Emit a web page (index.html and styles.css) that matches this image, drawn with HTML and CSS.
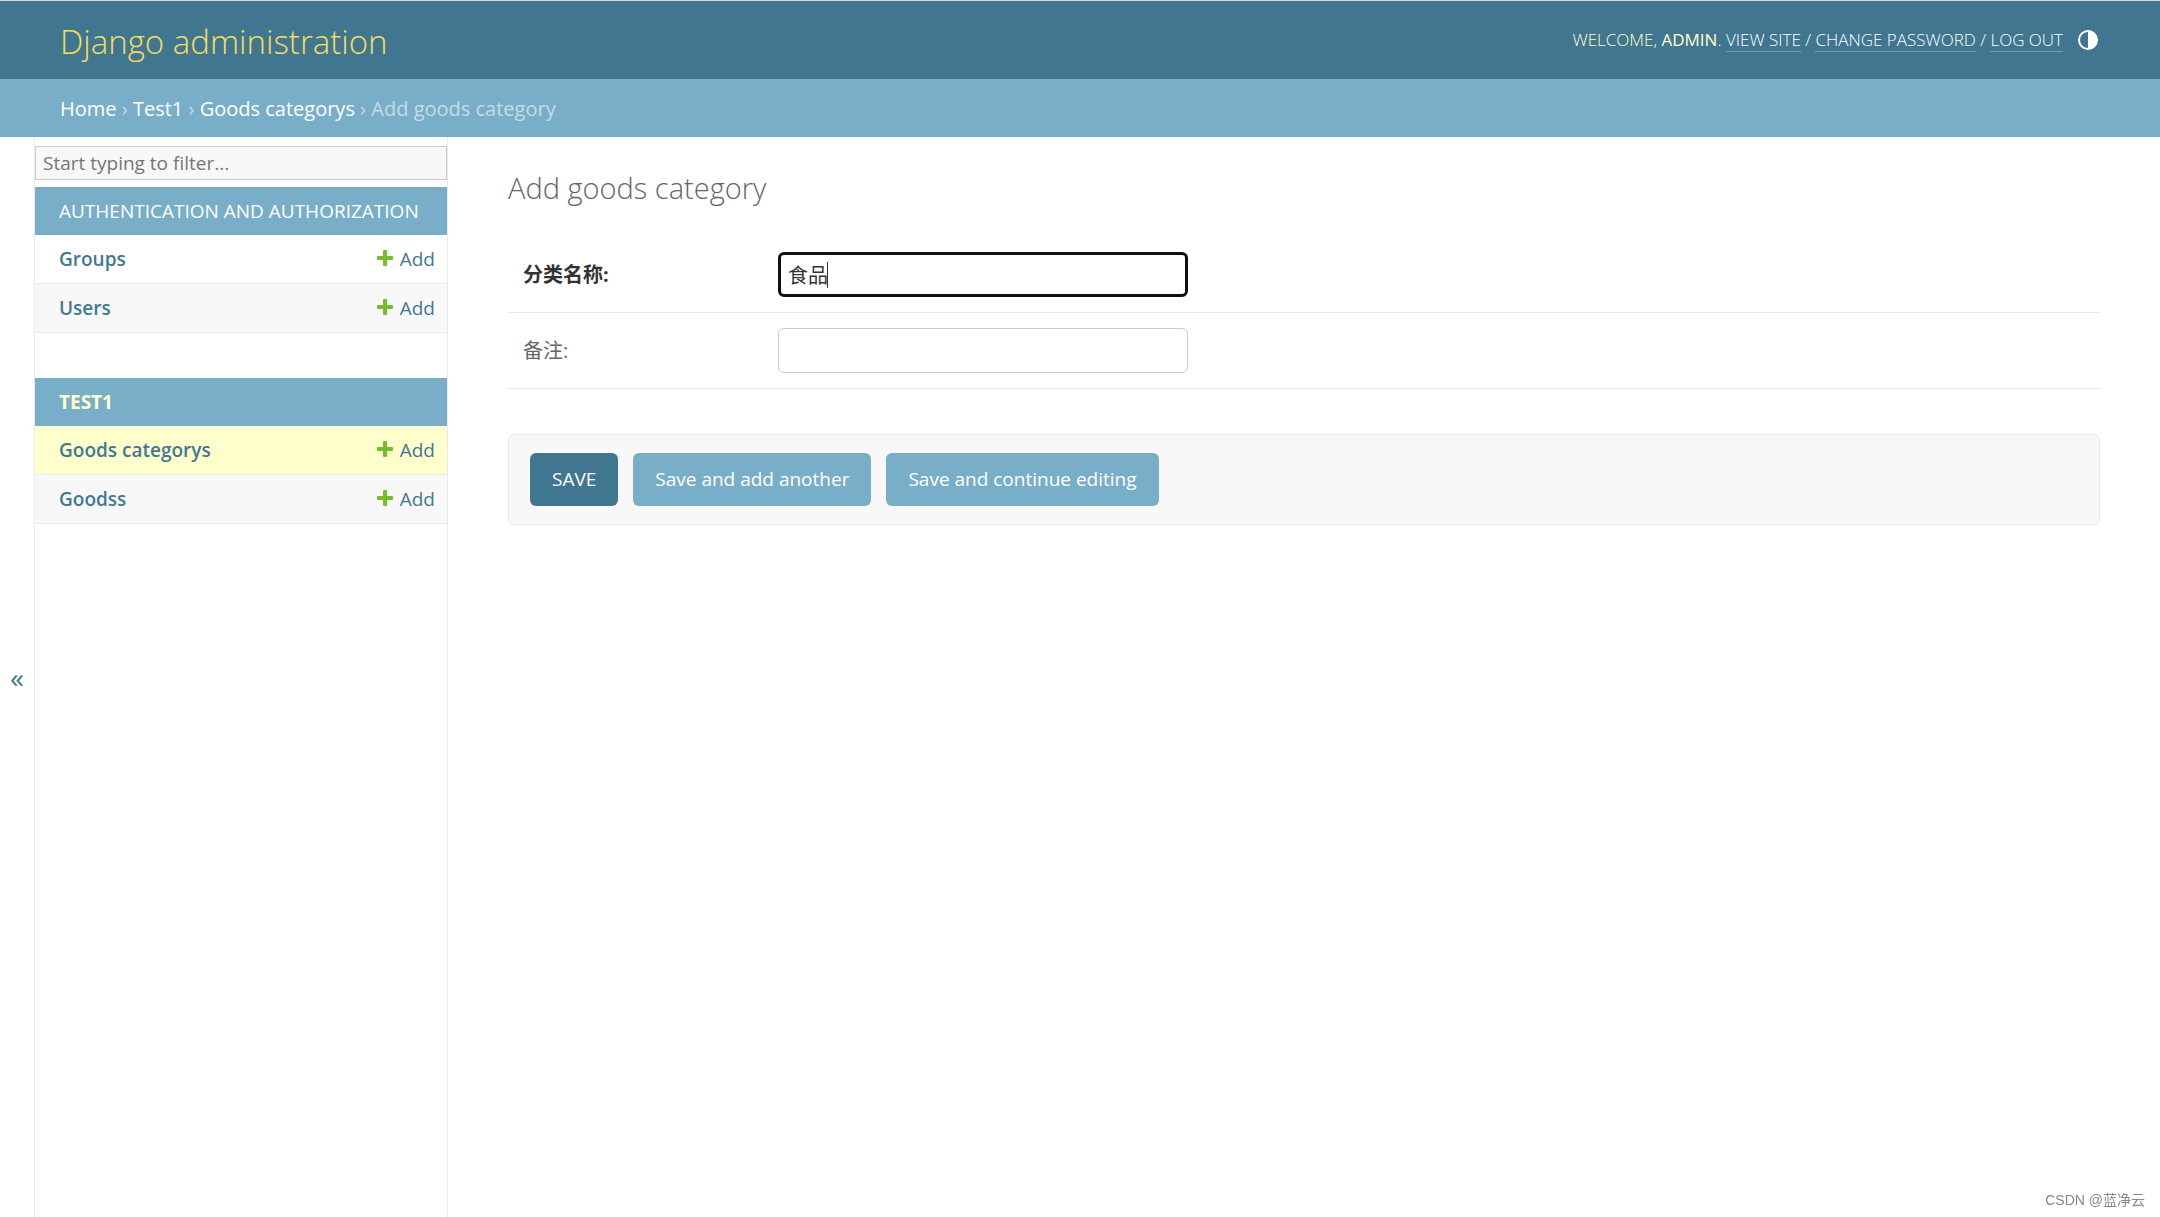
FILE: index.html
```html
<!DOCTYPE html>
<html lang="en">
<head>
    <meta charset="utf-8">
    <title>Add goods category | Django site admin</title>
    <link rel="stylesheet" href="styles.css">
</head>
<body>
    <header class="header">
        <h1 class="site-name"><a href="#">Django administration</a></h1>
        <div class="user-tools">
            <div>Welcome, <strong>admin</strong>. <a href="#">View site</a> / <a href="#">Change password</a> / <a href="#">Log out</a></div>
            <button class="theme-toggle" type="button" aria-label="Toggle theme">
                <svg viewBox="0 0 20 20" width="20" height="20">
                    <circle cx="10" cy="10" r="9" fill="none" stroke="currentColor" stroke-width="2"/>
                    <path d="M10 1a9 9 0 0 1 0 18z" fill="currentColor"/>
                </svg>
            </button>
        </div>
    </header>

    <nav class="breadcrumbs">
        <a href="#">Home</a> &rsaquo;
        <a href="#">Test1</a> &rsaquo;
        <a href="#">Goods categorys</a> &rsaquo;
        Add goods category
    </nav>

    <div class="main">
        <button class="toggle-sidebar" type="button" aria-label="Toggle navigation">&laquo;</button>

        <nav class="sidebar">
            <input class="nav-filter" type="search" placeholder="Start typing to filter..." aria-label="Filter navigation items">

            <table class="module">
                <caption><a href="#">Authentication and Authorization</a></caption>
                <tr>
                    <th scope="row"><a href="#">Groups</a></th>
                    <td><a class="addlink" href="#"><svg viewBox="0 0 16 16" width="16" height="16"><path d="M6 1q0-1 1-1h2q1 0 1 1v5h5q1 0 1 1v2q0 1-1 1h-5v5q0 1-1 1H7q-1 0-1-1v-5H1q-1 0-1-1V7q0-1 1-1h5z"/></svg>Add</a></td>
                </tr>
                <tr>
                    <th scope="row"><a href="#">Users</a></th>
                    <td><a class="addlink" href="#"><svg viewBox="0 0 16 16" width="16" height="16"><path d="M6 1q0-1 1-1h2q1 0 1 1v5h5q1 0 1 1v2q0 1-1 1h-5v5q0 1-1 1H7q-1 0-1-1v-5H1q-1 0-1-1V7q0-1 1-1h5z"/></svg>Add</a></td>
                </tr>
            </table>

            <table class="module current-app">
                <caption><a href="#">Test1</a></caption>
                <tr class="current-model">
                    <th scope="row"><a href="#">Goods categorys</a></th>
                    <td><a class="addlink" href="#"><svg viewBox="0 0 16 16" width="16" height="16"><path d="M6 1q0-1 1-1h2q1 0 1 1v5h5q1 0 1 1v2q0 1-1 1h-5v5q0 1-1 1H7q-1 0-1-1v-5H1q-1 0-1-1V7q0-1 1-1h5z"/></svg>Add</a></td>
                </tr>
                <tr>
                    <th scope="row"><a href="#">Goodss</a></th>
                    <td><a class="addlink" href="#"><svg viewBox="0 0 16 16" width="16" height="16"><path d="M6 1q0-1 1-1h2q1 0 1 1v5h5q1 0 1 1v2q0 1-1 1h-5v5q0 1-1 1H7q-1 0-1-1v-5H1q-1 0-1-1V7q0-1 1-1h5z"/></svg>Add</a></td>
                </tr>
            </table>
        </nav>

        <main class="content">
            <h2 class="title">Add goods category</h2>
            <form>
                <div class="form-row">
                    <label class="required" for="id_name">分类名称:</label>
                    <div class="field">
                        <input class="text-field active" type="text" id="id_name" value="食品">
                        <span class="caret"></span>
                    </div>
                </div>
                <div class="form-row">
                    <label for="id_remark">备注:</label>
                    <div class="field">
                        <input class="text-field" type="text" id="id_remark">
                    </div>
                </div>
                <div class="submit-row">
                    <button class="button default" type="submit">SAVE</button>
                    <button class="button" type="submit">Save and add another</button>
                    <button class="button" type="submit">Save and continue editing</button>
                </div>
            </form>
        </main>
    </div>

    <div class="watermark">CSDN @蓝净云</div>
</body>
</html>
```
FILE: styles.css
```css
* {
    box-sizing: border-box;
}
body {
    margin: 0;
    min-height: 100vh;
    display: flex;
    flex-direction: column;
    border-top: 1px solid #d5dadb;
    font-family: "Open Sans", "Noto Sans CJK SC", sans-serif;
    font-size: 19px;
    line-height: 24px;
    color: #333;
    background: #fff;
}
a {
    color: #417893;
    text-decoration: none;
}
button {
    font-family: inherit;
    border: none;
    cursor: pointer;
}

/* Header */
.header {
    display: flex;
    justify-content: space-between;
    align-items: center;
    padding: 0 60px;
    background: #417690;
    color: #ffc;
}
.site-name {
    margin: 0;
    padding: 19px 0 15px;
    font-size: 33px;
    line-height: 44px;
    font-weight: 300;
}
.site-name a {
    color: #f5dd5d;
}
.user-tools {
    display: flex;
    align-items: center;
    gap: 15px;
    font-size: 17px;
    line-height: 20px;
    font-weight: 300;
    text-transform: uppercase;
}
.user-tools a {
    color: #fff;
    border-bottom: 1px solid #7198ac;
}
.theme-toggle {
    padding: 0;
    margin-right: 2px;
    background: none;
    color: #fff;
}
.theme-toggle svg {
    display: block;
}
.breadcrumbs {
    padding: 18px 60px 16px;
    font-size: 20px;
    background: #79aec8;
    color: #c4dce8;
}
.breadcrumbs a {
    color: #fff;
}

/* Sidebar */
.main {
    display: flex;
    flex: 1;
}
.toggle-sidebar {
    width: 35px;
    padding: 0;
    border-right: 1px solid #eaeaea;
    background: #fff;
    color: #417893;
    font-size: 28px;
}
.sidebar {
    width: 413px;
    flex-shrink: 0;
    padding-top: 9px;
    border-right: 1px solid #eaeaea;
}
.nav-filter {
    display: block;
    width: 100%;
    height: 34px;
    margin-bottom: 7px;
    padding: 2px 7px;
    border: 1px solid #ccc;
    border-radius: 0;
    background: #f8f8f8;
    font-family: inherit;
    font-size: 19px;
}
.nav-filter::placeholder {
    color: #757575;
}
.module {
    width: 100%;
    margin-bottom: 45px;
    border-spacing: 0;
}
.module caption {
    padding: 12px 24px;
    background: #79aec8;
    text-align: left;
    text-transform: uppercase;
}
.module caption a {
    color: #fff;
}
.module th,
.module td {
    height: 49px;
    padding: 12px;
    border-bottom: 1px solid #eaeaea;
    text-align: left;
}
.module th {
    padding-left: 24px;
    font-weight: 600;
}
.module td {
    text-align: right;
}
.module tr:nth-child(even) {
    background: #f8f8f8;
}
.module .current-model {
    background: #ffc;
}
.current-app caption a {
    color: #ffc;
    font-weight: 700;
}
.addlink {
    display: inline-flex;
    gap: 7px;
    vertical-align: top;
}
.addlink svg {
    margin-top: 3px;
    fill: #70bf2b;
}

/* Form */
.content {
    flex: 1;
    padding: 29px 60px;
}
.title {
    margin: 0 0 42px;
    font-size: 29px;
    line-height: 44px;
    font-weight: 300;
    color: #666;
}
.form-row {
    display: flex;
    align-items: center;
    padding: 15px;
    border-bottom: 1px solid #eaeaea;
}
.form-row:first-child {
    padding-top: 0;
}
.form-row label {
    width: 255px;
    font-size: 20px;
    color: #666;
}
.form-row .required {
    font-weight: 700;
    color: #333;
}
.field {
    position: relative;
}
.text-field {
    display: block;
    width: 410px;
    height: 45px;
    padding: 8px 9px;
    border: 1px solid #ccc;
    border-radius: 6px;
    font-family: inherit;
    font-size: 20px;
    color: #333;
}
.text-field.active {
    padding: 6px 7px;
    border: 3px solid #101010;
}
.caret {
    position: absolute;
    left: 49px;
    top: 10px;
    width: 1px;
    height: 26px;
    background: #333;
}
.submit-row {
    display: flex;
    gap: 15px;
    margin-top: 45px;
    padding: 18px 21px;
    border: 1px solid #eaeaea;
    border-radius: 6px;
    background: #f8f8f8;
}
.button {
    padding: 15px 22px;
    border-radius: 6px;
    background: #79aec8;
    color: #fff;
    font-size: 19px;
    line-height: 23px;
}
.button.default {
    background: #417690;
}
.watermark {
    position: fixed;
    right: 15px;
    bottom: 5px;
    font-family: "Liberation Sans", "Noto Sans CJK SC", sans-serif;
    font-size: 14px;
    color: #888;
}
```
